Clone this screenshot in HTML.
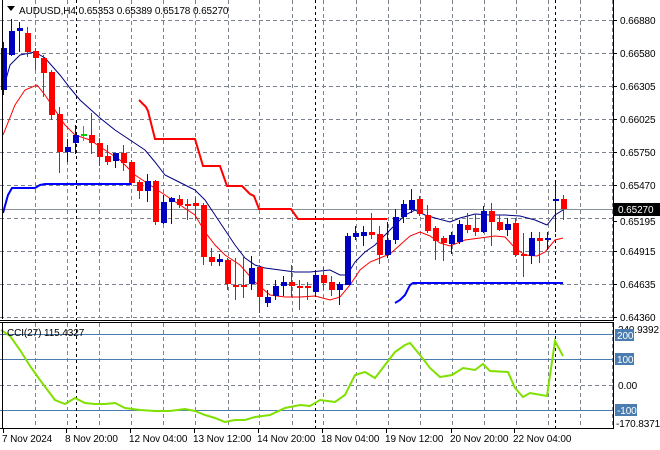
<!DOCTYPE html>
<html><head><meta charset="utf-8"><style>
html,body{margin:0;padding:0;background:#fff;width:660px;height:450px;overflow:hidden}
svg{display:block}
text{font-family:"Liberation Sans",sans-serif;font-size:10px;fill:#000;letter-spacing:-0.1px}
</style></head><body>
<svg id="s" width="660" height="450" xmlns="http://www.w3.org/2000/svg">
<rect width="660" height="450" fill="#fff"/>
<g id="grid" stroke="#7a8290" stroke-dasharray="4,3" stroke-width="1"></g>
<line x1="0" y1="209.5" x2="614" y2="209.5" stroke="#8a9098"/>
<g stroke-width="1">
<line x1="0" y1="334.5" x2="614" y2="334.5" stroke="#4a7cb0"/>
<line x1="0" y1="359.5" x2="614" y2="359.5" stroke="#4a7cb0"/>
<line x1="0" y1="410.5" x2="614" y2="410.5" stroke="#4a7cb0"/>
</g>
<g id="sep" stroke="#000" stroke-dasharray="3,3"></g>
<polyline fill="none" stroke="#0000ff" stroke-width="2" points="3,213 8,195 12,188 35,188 40,185 45,184 131,184"/>
<polyline fill="none" stroke="#0000ff" stroke-width="2" points="395,303 400,300 405,295 410,285 413,283 563,283"/>
<polyline fill="none" stroke="#ff0000" stroke-width="2" points="139,100 146,107 148,111 155,139 195,139 203,166 220,166 227,186 242,186 250,194 254,196 259,209 291,209 298,219 387,219"/>
<polyline fill="none" stroke="#000080" stroke-width="1" points="3,90 10,65 20,55 35,52 45,58 60,75 70,88 80,100 100,118 115,130 130,140 145,150 155,162 165,175 175,180 185,185 195,190 205,200 215,215 225,230 235,245 245,258 255,265 265,268 280,270 295,272 310,272 330,270 340,275 347,275 355,262 365,252 375,245 385,235 395,225 405,215 415,210 425,215 435,218 450,222 460,218 475,214 490,215 505,215 520,216 535,220 547,225 555,215 563,210"/>
<polyline fill="none" stroke="#ff0000" stroke-width="1" points="3,135 15,105 25,90 37,85 45,95 55,110 65,125 75,135 90,140 105,150 120,160 135,175 150,185 165,195 180,205 195,215 205,232 215,245 225,255 240,265 255,282 270,295 285,297 300,297 315,296 330,300 340,297 350,285 360,270 370,262 380,258 390,254 400,245 410,236 420,232 430,236 440,243 450,246 465,240 480,238 495,236 505,237 515,248 525,255 537,256 545,252 555,240 563,238"/>
<g id="c"></g>
<polyline fill="none" stroke="#80e000" stroke-width="2" points="1,330 10,336 20,350 30,366 40,380 55,400 65,404 75,398 85,403 95,404 105,404 115,403 125,408 140,410 155,411 170,411 185,409 195,411 205,415 215,418 225,422 235,420 245,420 255,417 270,415 285,408 300,405 310,406 320,400 335,402 345,395 355,375 365,372 375,378 385,365 395,352 405,345 410,343 420,355 430,368 440,377 452,375 463,368 475,370 483,364 490,371 508,372 515,388 523,397 530,393 547,396 555,341 563,356"/>
<line x1="2.5" y1="0" x2="2.5" y2="319" stroke="#000"/>
<line x1="613.5" y1="0" x2="613.5" y2="320" stroke="#000"/>
<line x1="0" y1="320.5" x2="614" y2="320.5" stroke="#000"/>
<line x1="0" y1="322.5" x2="614" y2="322.5" stroke="#000"/>
<line x1="613.5" y1="322" x2="613.5" y2="429" stroke="#000"/>
<line x1="0" y1="428.5" x2="614" y2="428.5" stroke="#000"/>
<line x1="2.5" y1="322" x2="2.5" y2="429" stroke="#000"/>
<polygon points="7,6 15,6 11,11" fill="#000"/>
<text x="19" y="14">AUDUSD,H4  0.65353 0.65389 0.65178 0.65270</text>
<text x="7" y="336">CCI(27) 115.4327</text>
<g id="ax"></g>
<rect x="614" y="203" width="46" height="13" fill="#000"/>
<text x="618" y="213" style="fill:#fff">0.65270</text>
<text x="618" y="333">240.9392</text>
<rect x="615" y="329" width="19" height="12" fill="#4a7cb0"/>
<text x="617" y="339" style="fill:#fff">200</text>
<rect x="615" y="353" width="19" height="12" fill="#4a7cb0"/>
<text x="617" y="363" style="fill:#fff">100</text>
<text x="618" y="389">0.00</text>
<rect x="615" y="404" width="22" height="12" fill="#4a7cb0"/>
<text x="617" y="414" style="fill:#fff">-100</text>
<text x="616" y="427">-170.8371</text>
<g id="tx"></g>
</svg>
<script>
var NS="http://www.w3.org/2000/svg";
function el(p,t,a){var e=document.createElementNS(NS,t);for(var k in a)e.setAttribute(k,a[k]);document.getElementById(p).appendChild(e);return e;}
var vx=[35,67,99,131,163,195,228,259,292,323,356,388,420,452,484,516,548,580,612];
vx.forEach(function(x){el('grid','line',{x1:x+.5,y1:0,x2:x+.5,y2:318});el('grid','line',{x1:x+.5,y1:323,x2:x+.5,y2:428});});
[20,53,86,119,152,185,218,251,284,317].forEach(function(y){el('grid','line',{x1:0,y1:y+.5,x2:613,y2:y+.5});});
el('grid','line',{x1:0,y1:385.5,x2:613,y2:385.5});
[76,315,555].forEach(function(x){el('sep','line',{x1:x+.5,y1:0,x2:x+.5,y2:428});});
var lab=[["0.66880",20],["0.66580",53],["0.66305",86],["0.66025",119],["0.65750",152],["0.65470",185],["0.65195",221],["0.64915",251],["0.64635",284],["0.64360",317]];
lab.forEach(function(l){var t=el('ax','text',{x:620,y:l[1]+4});t.textContent=l[0];el('ax','line',{x1:614,y1:l[1]+.5,x2:617,y2:l[1]+.5,stroke:'#000'});});
var tl=[["7 Nov 2024",2],["8 Nov 20:00",65],["12 Nov 04:00",129],["13 Nov 12:00",193],["14 Nov 20:00",257],["18 Nov 04:00",321],["19 Nov 12:00",385],["20 Nov 20:00",450],["22 Nov 04:00",513]];
tl.forEach(function(l){var t=el('tx','text',{x:l[1],y:442});t.textContent=l[0];el('tx','line',{x1:l[1]+1.5,y1:429,x2:l[1]+1.5,y2:433,stroke:'#000'});});
var C=[[90,48,42,95],[55,31,19,56],[31,28,22,52],[33,52,27,57],[51,58,48,70],[58,73,55,97],[72,115,70,120],[114,152,107,173],[152,147,139,162],[143,135,125,154],[134,134,126,141],[135,143,113,154],[143,157,138,166],[156,162,145,165],[161,153,153,168],[153,163,145,171],[162,183,160,185],[182,191,180,199],[191,181,174,202],[181,222,180,225],[223,202,195,224],[202,198,197,224],[199,205,195,208],[204,204,199,220],[203,206,197,219],[205,257,203,265],[257,262,248,266],[262,259,254,266],[260,284,258,290],[285,285,258,300],[285,285,256,298],[284,268,256,290],[267,297,265,313],[303,297,290,307],[296,286,280,300],[286,282,276,296],[282,286,265,297],[286,286,280,310],[286,288,282,300],[292,275,270,297],[275,283,267,290],[282,290,276,296],[290,284,282,305],[285,236,233,285],[237,233,226,240],[236,232,226,246],[232,235,213,239],[234,255,226,264],[255,240,222,258],[240,217,209,244],[217,204,200,223],[210,200,189,213],[199,214,196,216],[215,231,205,233],[228,241,226,260],[238,243,236,261],[244,235,232,254],[242,224,220,244],[225,230,213,233],[228,232,214,236],[232,211,206,233],[211,222,203,246],[222,230,215,231],[230,224,218,236],[223,255,218,257],[254,256,233,277],[256,238,232,264],[238,241,232,263],[240,238,232,250],[201,199,183,232],[199,209,195,220]];
C.forEach(function(c,i){var x=3+8*i;var bull=c[1]<c[0];var col=(i==10)?'#00cc00':(bull?'#0000c0':'#ff0000');
el('c','line',{x1:x+.5,y1:c[2],x2:x+.5,y2:c[3],stroke:col});
var t=Math.min(c[0],c[1]),b=Math.max(c[0],c[1]);
el('c','rect',{x:x-2,y:t,width:6,height:Math.max(2,b-t),fill:col});});
</script>
</body></html>
